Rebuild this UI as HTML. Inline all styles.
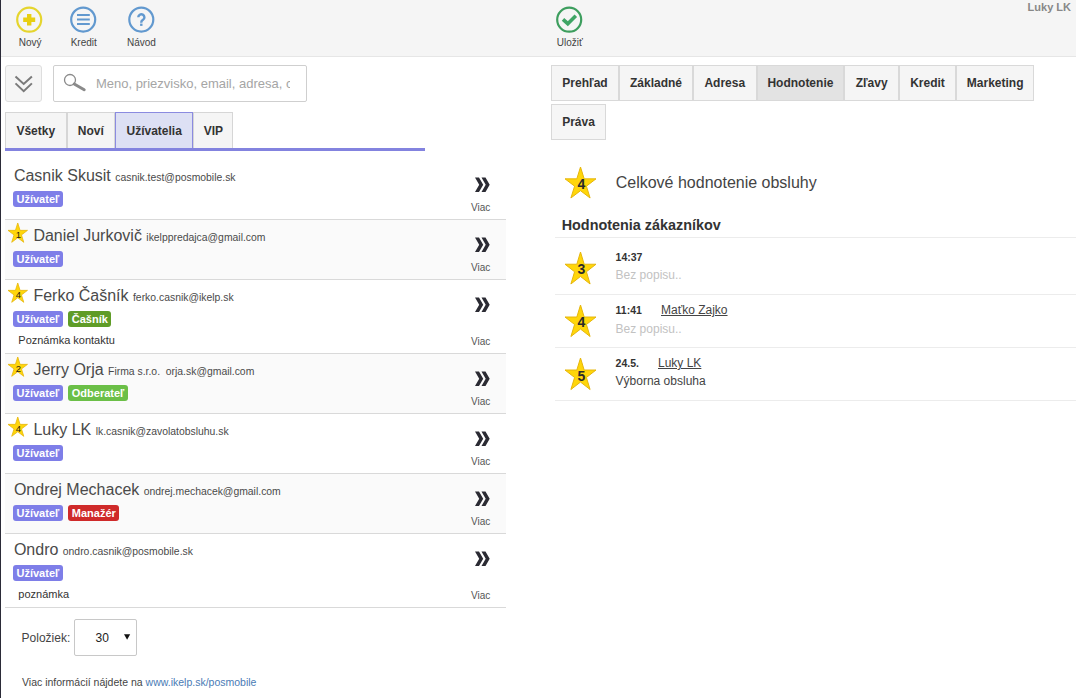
<!DOCTYPE html>
<html><head><meta charset="utf-8">
<style>
html,body{margin:0;padding:0;}
body{width:1076px;height:698px;overflow:hidden;position:relative;background:#fff;font-family:"Liberation Sans",sans-serif;}
.t{position:absolute;line-height:1;white-space:nowrap;}
.abs{position:absolute;}
.badge{position:absolute;height:16px;border-radius:3px;color:#fff;font-weight:bold;font-size:11px;line-height:17px;padding:0 3.5px;box-sizing:border-box;}
.tab{position:absolute;box-sizing:border-box;border:1px solid #d9d9d9;background:#f6f6f6;}
.sep{position:absolute;height:1px;}
</style></head><body>
<div class="abs" style="left:0;top:0;width:1076px;height:56px;background:#f5f5f5;border-bottom:1px solid #e6e6e6;"></div>
<div class="abs" style="left:0;top:0;width:1px;height:698px;background:#2b2b38;"></div>
<svg class="abs" style="left:0;top:0" width="1076" height="56" viewBox="0 0 1076 56"><circle cx="29.2" cy="19.7" r="12" fill="none" stroke="#e5d52e" stroke-width="2.2"/><path d="M23.2 19.7h12M29.2 14v11.4" stroke="#e8cf10" stroke-width="4.4"/><circle cx="83.2" cy="19.6" r="12" fill="none" stroke="#6299cf" stroke-width="2.2"/><path d="M77 15.1h12.8M77 19.5h12.8M77 24h12.8" stroke="#6299cf" stroke-width="2"/><circle cx="141.3" cy="19.6" r="12" fill="none" stroke="#6299cf" stroke-width="2.2"/><path d="M138.3 17.3a3.05 3.05 0 1 1 4.7 2.55c-1.1 .7-1.7 1.1-1.7 2.3v.5" fill="none" stroke="#6299cf" stroke-width="2.4"/><rect x="140.1" y="23.6" width="2.4" height="2.3" fill="#6299cf"/><circle cx="569.2" cy="19.7" r="12" fill="none" stroke="#3d9e5e" stroke-width="2.2"/><path d="M563 19.3l4.8 4.4 8-8" fill="none" stroke="#3fa565" stroke-width="3.6"/></svg>
<div class="t" style="left:18.8px;top:38px;font-size:10px;color:#444;">Nový</div>
<div class="t" style="left:70.7px;top:38px;font-size:10px;color:#444;">Kredit</div>
<div class="t" style="left:127px;top:38px;font-size:10px;color:#444;">Návod</div>
<div class="t" style="left:556.8px;top:38px;font-size:10px;color:#444;">Uložiť</div>
<div class="t" style="left:1027.6px;top:2px;font-size:11px;color:#888;font-weight:bold;">Luky LK</div>
<div class="abs" style="left:5px;top:65px;width:37px;height:37px;box-sizing:border-box;border:1px solid #dedede;border-radius:3px;background:#f5f5f5;"></div>
<svg class="abs" style="left:0;top:60px" width="60" height="50" viewBox="0 60 60 50"><path d="M15.5 76.5l8.2 7.5 8.2-7.5M15.5 83.4l8.2 7.8 8.2-7.8" fill="none" stroke="#7a7a7a" stroke-width="2"/></svg>
<div class="abs" style="left:53px;top:65px;width:254px;height:37px;box-sizing:border-box;border:1px solid #cfcfcf;border-radius:2px;background:#fff;"></div>
<svg class="abs" style="left:55px;top:68px" width="40" height="30" viewBox="55 68 40 30"><circle cx="70" cy="80" r="5.5" fill="none" stroke="#8a8a8a" stroke-width="1.3"/><path d="M74.2 84l10 5.8" stroke="#8a8a8a" stroke-width="3" stroke-linecap="round"/></svg>
<div class="abs" style="left:95px;top:70px;width:195px;height:26px;overflow:hidden;"><div class="t" style="left:0.9px;top:7px;font-size:13px;color:#a5a5a5;">Meno, priezvisko, email, adresa, ceny</div>
</div>
<div class="abs" style="left:5px;top:148px;width:420px;height:3px;background:#8383df;"></div>
<div class="tab" style="left:5px;top:112px;width:61.5px;height:36px;background:#f5f5f5;border-color:#d6d6d6;border-bottom:none;"></div>
<div class="t" style="left:5px;width:61.5px;text-align:center;top:125px;font-size:12px;font-weight:bold;color:#333;">Všetky</div>
<div class="tab" style="left:66.5px;top:112px;width:48.5px;height:36px;background:#f5f5f5;border-color:#d6d6d6;border-bottom:none;"></div>
<div class="t" style="left:66.5px;width:48.5px;text-align:center;top:125px;font-size:12px;font-weight:bold;color:#333;">Noví</div>
<div class="tab" style="left:115px;top:112px;width:78.30000000000001px;height:36px;background:#dde0f4;border-color:#8b8be0;border-bottom:none;"></div>
<div class="t" style="left:115px;width:78.30000000000001px;text-align:center;top:125px;font-size:12px;font-weight:bold;color:#333;">Užívatelia</div>
<div class="tab" style="left:193.3px;top:112px;width:40.19999999999999px;height:36px;background:#f5f5f5;border-color:#d6d6d6;border-bottom:none;"></div>
<div class="t" style="left:193.3px;width:40.19999999999999px;text-align:center;top:125px;font-size:12px;font-weight:bold;color:#333;">VIP</div>
<div class="abs" style="left:5px;top:151px;width:501px;height:68px;background:#fff;"></div>
<div class="sep" style="left:5px;top:219px;width:501px;background:#d9d9d9;"></div>
<div class="t" style="left:13.9px;top:168px;font-size:16px;color:#4a4a4a;">Casnik Skusit <span style="font-size:10.4px">casnik.test@posmobile.sk</span></div>
<div class="badge" style="left:13px;top:191px;background:#7e7ee8;">Užívateľ</div>
<svg class="abs" style="left:470px;top:174.8px" width="26" height="20" viewBox="470 174.8 26 20"><path d="M475 177.20000000000002h4l4.2 7.3-4.2 7.3h-4l4.2-7.3z M481.5 177.20000000000002h4l4.2 7.3-4.2 7.3h-4l4.2-7.3z" fill="#2b2b33"/></svg>
<div class="t" style="left:471px;top:203px;font-size:10px;color:#555;">Viac</div>
<div class="abs" style="left:5px;top:220px;width:501px;height:59px;background:#fafafa;"></div>
<div class="sep" style="left:5px;top:279px;width:501px;background:#d9d9d9;"></div>
<svg class="abs" style="left:6.05px;top:221.00px" width="23.50" height="23.30" viewBox="6.05 221.00 23.50 23.30"><polygon points="17.80,223.00 20.10,230.37 27.55,230.37 21.52,234.93 23.83,242.30 17.80,237.74 11.77,242.30 14.08,234.93 8.05,230.37 15.50,230.37" fill="#ffd60a" stroke="#e6b60c" stroke-width="0.8" stroke-linejoin="miter"/><text x="18.50" y="237.8" text-anchor="middle" font-family="Liberation Sans" font-weight="normal" font-size="9.5" fill="#2a2010">1</text></svg>
<div class="t" style="left:33.4px;top:228px;font-size:16px;color:#4a4a4a;">Daniel Jurkovič <span style="font-size:10.4px">ikelppredajca@gmail.com</span></div>
<div class="badge" style="left:13px;top:251px;background:#7e7ee8;">Užívateľ</div>
<svg class="abs" style="left:470px;top:234.8px" width="26" height="20" viewBox="470 234.8 26 20"><path d="M475 237.20000000000002h4l4.2 7.3-4.2 7.3h-4l4.2-7.3z M481.5 237.20000000000002h4l4.2 7.3-4.2 7.3h-4l4.2-7.3z" fill="#2b2b33"/></svg>
<div class="t" style="left:471px;top:263px;font-size:10px;color:#555;">Viac</div>
<div class="abs" style="left:5px;top:280px;width:501px;height:73px;background:#fff;"></div>
<div class="sep" style="left:5px;top:353px;width:501px;background:#d9d9d9;"></div>
<svg class="abs" style="left:6.05px;top:281.00px" width="23.50" height="23.30" viewBox="6.05 281.00 23.50 23.30"><polygon points="17.80,283.00 20.10,290.37 27.55,290.37 21.52,294.93 23.83,302.30 17.80,297.74 11.77,302.30 14.08,294.93 8.05,290.37 15.50,290.37" fill="#ffd60a" stroke="#e6b60c" stroke-width="0.8" stroke-linejoin="miter"/><text x="18.50" y="297.8" text-anchor="middle" font-family="Liberation Sans" font-weight="normal" font-size="9.5" fill="#2a2010">4</text></svg>
<div class="t" style="left:33.4px;top:288px;font-size:16px;color:#4a4a4a;">Ferko Čašník <span style="font-size:10.4px">ferko.casnik@ikelp.sk</span></div>
<div class="badge" style="left:13px;top:311px;background:#7e7ee8;">Užívateľ</div>
<div class="badge" style="left:68.3px;top:311px;background:#5f9c27;">Čašník</div>
<div class="t" style="left:18.3px;top:335px;font-size:11px;color:#333;">Poznámka kontaktu</div>
<svg class="abs" style="left:470px;top:294.8px" width="26" height="20" viewBox="470 294.8 26 20"><path d="M475 297.2h4l4.2 7.3-4.2 7.3h-4l4.2-7.3z M481.5 297.2h4l4.2 7.3-4.2 7.3h-4l4.2-7.3z" fill="#2b2b33"/></svg>
<div class="t" style="left:471px;top:337px;font-size:10px;color:#555;">Viac</div>
<div class="abs" style="left:5px;top:354px;width:501px;height:59px;background:#fafafa;"></div>
<div class="sep" style="left:5px;top:413px;width:501px;background:#d9d9d9;"></div>
<svg class="abs" style="left:6.05px;top:355.00px" width="23.50" height="23.30" viewBox="6.05 355.00 23.50 23.30"><polygon points="17.80,357.00 20.10,364.37 27.55,364.37 21.52,368.93 23.83,376.30 17.80,371.74 11.77,376.30 14.08,368.93 8.05,364.37 15.50,364.37" fill="#ffd60a" stroke="#e6b60c" stroke-width="0.8" stroke-linejoin="miter"/><text x="18.50" y="371.8" text-anchor="middle" font-family="Liberation Sans" font-weight="normal" font-size="9.5" fill="#2a2010">2</text></svg>
<div class="t" style="left:33.4px;top:362px;font-size:16px;color:#4a4a4a;">Jerry Orja <span style="font-size:10.4px">Firma s.r.o.&nbsp; orja.sk@gmail.com</span></div>
<div class="badge" style="left:13px;top:385px;background:#7e7ee8;">Užívateľ</div>
<div class="badge" style="left:68.3px;top:385px;background:#6bbf47;">Odberateľ</div>
<svg class="abs" style="left:470px;top:368.8px" width="26" height="20" viewBox="470 368.8 26 20"><path d="M475 371.2h4l4.2 7.3-4.2 7.3h-4l4.2-7.3z M481.5 371.2h4l4.2 7.3-4.2 7.3h-4l4.2-7.3z" fill="#2b2b33"/></svg>
<div class="t" style="left:471px;top:397px;font-size:10px;color:#555;">Viac</div>
<div class="abs" style="left:5px;top:414px;width:501px;height:59px;background:#fff;"></div>
<div class="sep" style="left:5px;top:473px;width:501px;background:#d9d9d9;"></div>
<svg class="abs" style="left:6.05px;top:415.00px" width="23.50" height="23.30" viewBox="6.05 415.00 23.50 23.30"><polygon points="17.80,417.00 20.10,424.37 27.55,424.37 21.52,428.93 23.83,436.30 17.80,431.74 11.77,436.30 14.08,428.93 8.05,424.37 15.50,424.37" fill="#ffd60a" stroke="#e6b60c" stroke-width="0.8" stroke-linejoin="miter"/><text x="18.50" y="431.8" text-anchor="middle" font-family="Liberation Sans" font-weight="normal" font-size="9.5" fill="#2a2010">4</text></svg>
<div class="t" style="left:33.4px;top:422px;font-size:16px;color:#4a4a4a;">Luky LK <span style="font-size:10.4px">lk.casnik@zavolatobsluhu.sk</span></div>
<div class="badge" style="left:13px;top:445px;background:#7e7ee8;">Užívateľ</div>
<svg class="abs" style="left:470px;top:428.8px" width="26" height="20" viewBox="470 428.8 26 20"><path d="M475 431.2h4l4.2 7.3-4.2 7.3h-4l4.2-7.3z M481.5 431.2h4l4.2 7.3-4.2 7.3h-4l4.2-7.3z" fill="#2b2b33"/></svg>
<div class="t" style="left:471px;top:457px;font-size:10px;color:#555;">Viac</div>
<div class="abs" style="left:5px;top:474px;width:501px;height:59px;background:#fafafa;"></div>
<div class="sep" style="left:5px;top:533px;width:501px;background:#d9d9d9;"></div>
<div class="t" style="left:13.9px;top:482px;font-size:16px;color:#4a4a4a;">Ondrej Mechacek <span style="font-size:10.4px">ondrej.mechacek@gmail.com</span></div>
<div class="badge" style="left:13px;top:505px;background:#7e7ee8;">Užívateľ</div>
<div class="badge" style="left:68.3px;top:505px;background:#cf2a2a;">Manažér</div>
<svg class="abs" style="left:470px;top:488.8px" width="26" height="20" viewBox="470 488.8 26 20"><path d="M475 491.2h4l4.2 7.3-4.2 7.3h-4l4.2-7.3z M481.5 491.2h4l4.2 7.3-4.2 7.3h-4l4.2-7.3z" fill="#2b2b33"/></svg>
<div class="t" style="left:471px;top:517px;font-size:10px;color:#555;">Viac</div>
<div class="abs" style="left:5px;top:534px;width:501px;height:73px;background:#fff;"></div>
<div class="sep" style="left:5px;top:607px;width:501px;background:#d9d9d9;"></div>
<div class="t" style="left:13.9px;top:542px;font-size:16px;color:#4a4a4a;">Ondro <span style="font-size:10.4px">ondro.casnik@posmobile.sk</span></div>
<div class="badge" style="left:13px;top:565px;background:#7e7ee8;">Užívateľ</div>
<div class="t" style="left:18.3px;top:589px;font-size:11px;color:#333;">poznámka</div>
<svg class="abs" style="left:470px;top:548.8px" width="26" height="20" viewBox="470 548.8 26 20"><path d="M475 551.1999999999999h4l4.2 7.3-4.2 7.3h-4l4.2-7.3z M481.5 551.1999999999999h4l4.2 7.3-4.2 7.3h-4l4.2-7.3z" fill="#2b2b33"/></svg>
<div class="t" style="left:471px;top:591px;font-size:10px;color:#555;">Viac</div>
<div class="t" style="left:21.6px;top:632px;font-size:12px;color:#444;">Položiek:</div>
<div class="abs" style="left:74px;top:619px;width:63px;height:37px;box-sizing:border-box;border:1px solid #c8c8c8;border-radius:2px;background:#fff;"></div>
<div class="t" style="left:95.6px;top:632px;font-size:12px;color:#222;">30</div>
<svg class="abs" style="left:120px;top:630px" width="14" height="14" viewBox="120 630 14 14"><path d="M124 634.2h6.2l-3.1 5.6z" fill="#111"/></svg>
<div class="t" style="left:22px;top:677px;font-size:10.5px;color:#444;">Viac informácií nájdete na <span style="color:#4a7bb5">www.ikelp.sk/posmobile</span></div>
<div class="tab" style="left:551px;top:65px;width:68px;height:36px;background:#f5f5f5;"></div>
<div class="t" style="left:551px;width:68px;text-align:center;top:77px;font-size:12px;font-weight:bold;color:#333;">Prehľad</div>
<div class="tab" style="left:619px;top:65px;width:74px;height:36px;background:#f5f5f5;"></div>
<div class="t" style="left:619px;width:74px;text-align:center;top:77px;font-size:12px;font-weight:bold;color:#333;">Základné</div>
<div class="tab" style="left:693px;top:65px;width:63.5px;height:36px;background:#f5f5f5;"></div>
<div class="t" style="left:693px;width:63.5px;text-align:center;top:77px;font-size:12px;font-weight:bold;color:#333;">Adresa</div>
<div class="tab" style="left:756.5px;top:65px;width:87.79999999999995px;height:36px;background:#e3e3e3;"></div>
<div class="t" style="left:756.5px;width:87.79999999999995px;text-align:center;top:77px;font-size:12px;font-weight:bold;color:#333;">Hodnotenie</div>
<div class="tab" style="left:844.3px;top:65px;width:54.700000000000045px;height:36px;background:#f5f5f5;"></div>
<div class="t" style="left:844.3px;width:54.700000000000045px;text-align:center;top:77px;font-size:12px;font-weight:bold;color:#333;">Zľavy</div>
<div class="tab" style="left:899px;top:65px;width:57px;height:36px;background:#f5f5f5;"></div>
<div class="t" style="left:899px;width:57px;text-align:center;top:77px;font-size:12px;font-weight:bold;color:#333;">Kredit</div>
<div class="tab" style="left:956px;top:65px;width:78.40000000000009px;height:36px;background:#f5f5f5;"></div>
<div class="t" style="left:956px;width:78.40000000000009px;text-align:center;top:77px;font-size:12px;font-weight:bold;color:#333;">Marketing</div>
<div class="tab" style="left:551px;top:104px;width:55px;height:36px;"></div>
<div class="t" style="left:551px;width:55px;text-align:center;top:116px;font-size:12px;font-weight:bold;color:#333;">Práva</div>
<svg class="abs" style="left:563.40px;top:165.40px" width="35.00" height="35.00" viewBox="563.40 165.40 35.00 35.00"><polygon points="580.90,167.40 584.56,179.24 596.40,179.24 586.82,186.56 590.48,198.40 580.90,191.08 571.32,198.40 574.98,186.56 565.40,179.24 577.24,179.24" fill="#ffd60a" stroke="#e6b60c" stroke-width="1" stroke-linejoin="miter"/><text x="581.70" y="189.5" text-anchor="middle" font-family="Liberation Sans" font-weight="bold" font-size="14" fill="#2a2a2a">4</text></svg>
<div class="t" style="left:615.7px;top:175px;font-size:16px;color:#444;">Celkové hodnotenie obsluhy</div>
<div class="t" style="left:561.7px;top:218px;font-size:14.4px;color:#333;font-weight:bold;">Hodnotenia zákazníkov</div>
<div class="sep" style="left:555px;top:237px;width:521px;background:#ececec;"></div>
<div class="sep" style="left:555px;top:294px;width:521px;background:#ececec;"></div>
<div class="sep" style="left:555px;top:347px;width:521px;background:#ececec;"></div>
<div class="sep" style="left:555px;top:400px;width:521px;background:#ececec;"></div>
<svg class="abs" style="left:563.40px;top:249.50px" width="35.00" height="36.00" viewBox="563.40 249.50 35.00 36.00"><polygon points="580.90,251.50 584.56,263.72 596.40,263.72 586.82,271.28 590.48,283.50 580.90,275.95 571.32,283.50 574.98,271.28 565.40,263.72 577.24,263.72" fill="#ffd60a" stroke="#e6b60c" stroke-width="1" stroke-linejoin="miter"/><text x="581.70" y="273.5" text-anchor="middle" font-family="Liberation Sans" font-weight="bold" font-size="14" fill="#2a2a2a">3</text></svg>
<div class="t" style="left:615.6px;top:252px;font-size:10.5px;color:#333;font-weight:bold;">14:37</div>
<div class="t" style="left:615.6px;top:269px;font-size:12px;color:#c2c2c2;">Bez popisu..</div>
<svg class="abs" style="left:563.40px;top:303.00px" width="35.00" height="35.50" viewBox="563.40 303.00 35.00 35.50"><polygon points="580.90,305.00 584.56,317.03 596.40,317.03 586.82,324.47 590.48,336.50 580.90,329.06 571.32,336.50 574.98,324.47 565.40,317.03 577.24,317.03" fill="#ffd60a" stroke="#e6b60c" stroke-width="1" stroke-linejoin="miter"/><text x="581.70" y="327" text-anchor="middle" font-family="Liberation Sans" font-weight="bold" font-size="14" fill="#2a2a2a">4</text></svg>
<div class="t" style="left:615.6px;top:305px;font-size:10.5px;color:#333;font-weight:bold;">11:41</div>
<div class="t" style="left:661px;top:304px;font-size:12px;color:#444;text-decoration:underline;">Maťko Zajko</div>
<div class="t" style="left:615.6px;top:322.5px;font-size:12px;color:#c2c2c2;">Bez popisu..</div>
<svg class="abs" style="left:563.40px;top:355.50px" width="35.00" height="35.50" viewBox="563.40 355.50 35.00 35.50"><polygon points="580.90,357.50 584.56,369.53 596.40,369.53 586.82,376.97 590.48,389.00 580.90,381.56 571.32,389.00 574.98,376.97 565.40,369.53 577.24,369.53" fill="#ffd60a" stroke="#e6b60c" stroke-width="1" stroke-linejoin="miter"/><text x="581.70" y="380" text-anchor="middle" font-family="Liberation Sans" font-weight="bold" font-size="14" fill="#2a2a2a">5</text></svg>
<div class="t" style="left:615.6px;top:358px;font-size:10.5px;color:#333;font-weight:bold;">24.5.</div>
<div class="t" style="left:658px;top:357px;font-size:12px;color:#444;text-decoration:underline;">Luky LK</div>
<div class="t" style="left:615.6px;top:375px;font-size:12px;color:#444;">Výborna obsluha</div>
</body></html>
